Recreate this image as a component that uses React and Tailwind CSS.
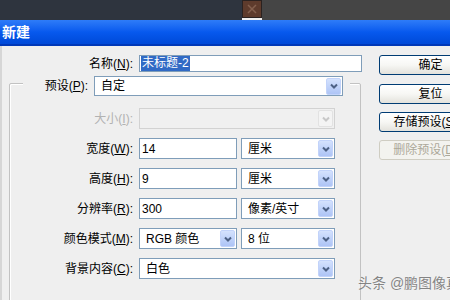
import React from "react";

function Arrow({ disabled }) {
  return (
    <div
      className={`w-[15px] h-[17px] mr-[1px] shrink-0 rounded-[2px] flex items-center justify-center ${
        disabled
          ? "bg-[#f4f4f4] border border-[#e2e2e2]"
          : "bg-gradient-to-b from-[#d4e2fd] to-[#aec4f6] border border-[#c2d3fa]"
      }`}
    >
      <svg width="8" height="6" viewBox="0 0 8 6">
        <path
          d="M1 1.5 L4 4.5 L7 1.5"
          fill="none"
          stroke={disabled ? "#c8c8c8" : "#4d6185"}
          strokeWidth="2"
        />
      </svg>
    </div>
  );
}

function Select({ value, disabled, className }) {
  return (
    <div
      className={`h-full flex items-center border ${
        disabled ? "border-[#d2d2d2] bg-[#f0f0f0]" : "border-[#7f9db9] bg-white"
      } ${className}`}
    >
      <span className="flex-1 pl-[6px] whitespace-nowrap">{value}</span>
      <Arrow disabled={disabled} />
    </div>
  );
}

function Input({ value, className }) {
  return (
    <div className={`h-full flex items-center border border-[#7f9db9] bg-white pl-[2px] ${className}`}>
      {value}
    </div>
  );
}

function Label({ text, mn, tail = "):", disabled }) {
  return (
    <div
      className={`w-[123px] shrink-0 text-right whitespace-nowrap ${
        disabled ? "text-[#b2b2b2]" : "text-black"
      }`}
    >
      {text}(<span className="underline">{mn}</span>
      {tail}
    </div>
  );
}

function Button({ children, disabled, className = "" }) {
  return (
    <div
      className={`h-[20px] w-[103px] rounded-[3px] border flex items-center justify-center ${
        disabled
          ? "border-[#cfcdc2] bg-[#f3f3ef] text-[#aca899]"
          : "border-[#003c74] bg-gradient-to-b from-white via-[#f7f7f4] to-[#e3e2dc] text-black"
      } ${className}`}
    >
      {children}
    </div>
  );
}

export default function App() {
  return (
    <div className="relative w-[450px] h-[300px] overflow-hidden flex flex-col bg-[#efefef] font-['Liberation_Sans','Noto_Sans_CJK_SC',sans-serif] text-[12px] leading-[14px] text-black">
      {/* backdrop behind the dialog */}
      <div className="h-[20px] shrink-0 flex">
        <div className="w-[242px] bg-[#2e343e]" />
        <div className="w-[20px] h-[18px] bg-[#5e3b2c] border border-[#2b2220] flex items-center justify-center">
          <svg width="12" height="12" viewBox="0 0 12 12">
            <path d="M2 2 L10 10 M10 2 L2 10" stroke="#84604e" strokeWidth="1.5" />
          </svg>
        </div>
        <div className="flex-1 bg-[#454545]" />
      </div>

      {/* title bar */}
      <div className="h-[26px] shrink-0 flex items-center pl-[2px] bg-gradient-to-b from-[#2e7cf8] via-[#0759ee] to-[#0049d8] border-b-[2px] border-[#0038b8] text-white font-bold text-[14px]">
        新建
      </div>

      {/* body */}
      <div className="flex-1 flex border-l-[2px] border-[#d6d6d6] pt-[9px] overflow-hidden">
        <div className="w-[360px] shrink-0 flex flex-col">
          {/* name */}
          <div className="h-[20px] flex items-center">
            <div className="w-[131px] shrink-0 text-right whitespace-nowrap">
              名称(<span className="underline">N</span>):
            </div>
            <div className="ml-[6px] flex-1 h-full flex items-center border border-[#7f9db9] bg-white pl-[1px]">
              <span className="bg-[#316ac5] text-white px-[1px] leading-[15px]">未标题-2</span>
            </div>
          </div>

          {/* group box */}
          <div className="mt-[11px] ml-[7px] w-[352px] h-[240px] shrink-0 border border-[#c2c2c2] rounded-[2px] shadow-[inset_1px_1px_0_#ffffff] flex flex-col">
            <div className="-mt-[8px] ml-[13px] w-[327px] h-[20px] bg-[#efefef] flex items-center pr-[7px]">
              <div className="w-[65px] shrink-0 text-right whitespace-nowrap">
                预设(<span className="underline">P</span>):
              </div>
              <Select value="自定" className="ml-[6px] flex-1" />
            </div>

            <div className="mt-[12px] flex flex-col gap-[9px]">
              <div className="h-[21px] flex items-center">
                <Label text="大小" mn="I" disabled />
                <Select value="" disabled className="ml-[6px] w-[196px]" />
              </div>
              <div className="h-[21px] flex items-center">
                <Label text="宽度" mn="W" />
                <Input value="14" className="ml-[6px] w-[98px]" />
                <Select value="厘米" className="ml-[4px] w-[94px]" />
              </div>
              <div className="h-[21px] flex items-center">
                <Label text="高度" mn="H" />
                <Input value="9" className="ml-[6px] w-[98px]" />
                <Select value="厘米" className="ml-[4px] w-[94px]" />
              </div>
              <div className="h-[21px] flex items-center">
                <Label text="分辨率" mn="R" />
                <Input value="300" className="ml-[6px] w-[98px]" />
                <Select value="像素/英寸" className="ml-[4px] w-[94px]" />
              </div>
              <div className="h-[21px] flex items-center">
                <Label text="颜色模式" mn="M" />
                <Select value="RGB 颜色" className="ml-[6px] w-[98px]" />
                <Select value="8 位" className="ml-[4px] w-[94px]" />
              </div>
              <div className="h-[21px] flex items-center">
                <Label text="背景内容" mn="C" />
                <Select value="白色" className="ml-[6px] w-[196px]" />
              </div>
            </div>
          </div>
        </div>

        {/* buttons */}
        <div className="ml-[17px] w-[103px] shrink-0 flex flex-col">
          <Button>确定</Button>
          <Button className="mt-[9px]">复位</Button>
          <Button className="mt-[8px]">
            存储预设(<span className="underline">S</span>)...
          </Button>
          <Button disabled className="mt-[8px]">
            删除预设(<span className="underline">D</span>)...
          </Button>
        </div>
      </div>

      {/* watermark */}
      <div className="absolute left-[358px] top-[276px] whitespace-nowrap text-[14px] text-[#6a6a6a] opacity-80 [text-shadow:0_0_2px_#ffffff]">
        头条 @鹏图像真小
      </div>
    </div>
  );
}
